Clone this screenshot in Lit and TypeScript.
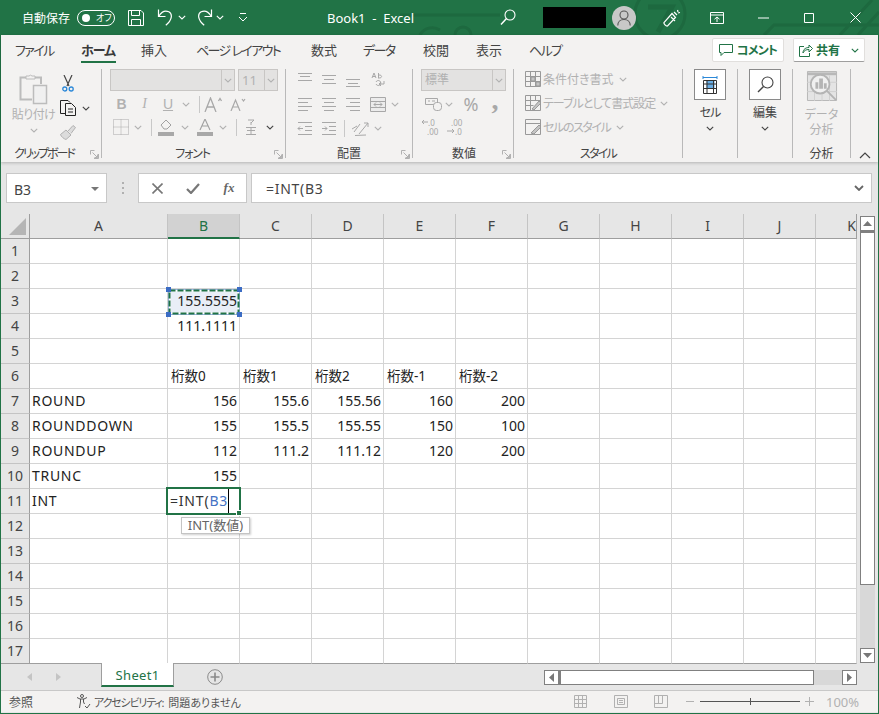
import { LitElement, html, css, svg } from "lit";
import { customElement } from "lit/decorators.js";

const chev = (c = "#b1b1b1") => html`<svg class="chev" width="8" height="5" viewBox="0 0 8 5"><path d="M.8 .8 4 4 7.2 .8" fill="none" stroke="${c}" stroke-width="1.1"/></svg>`;
const lines = (ys: number[][]) => html`<svg width="16" height="16" viewBox="0 0 16 16">${ys.map(([x1, x2, y]) => svg`<path d="M${x1} ${y + .5}H${x2}" stroke="#a8a8a8"/>`)}</svg>`;

const COLS = ["A", "B", "C", "D", "E", "F", "G", "H", "I", "J", "K"];
const DATA: Record<number, (string | null)[]> = {
  3: [null, "155.5555"],
  4: [null, "111.1111"],
  6: [null, "桁数0", "桁数1", "桁数2", "桁数-1", "桁数-2"],
  7: ["ROUND", "156", "155.6", "155.56", "160", "200"],
  8: ["ROUNDDOWN", "155", "155.5", "155.55", "150", "100"],
  9: ["ROUNDUP", "112", "111.2", "111.12", "120", "200"],
  10: ["TRUNC", "155"],
  11: ["INT"],
};
const TABS: [string, string][] = [["ファイル", "kn"], ["ホーム", "on"], ["挿入", ""], ["ページ レイアウト", "kn"], ["数式", ""], ["データ", "kn"], ["校閲", ""], ["表示", ""], ["ヘルプ", "kn"]];

@customElement("app-root")
export class AppRoot extends LitElement {
  static styles = css`
    :host { display: block; width: 879px; height: 714px; overflow: hidden; background: #e6e6e6;
      font-family: "Noto Sans", "Noto Sans CJK JP", sans-serif; font-feature-settings: "palt"; color: #444; }
    * { box-sizing: border-box; }
    svg { display: block; }
    .win { height: 714px; display: flex; flex-direction: column; border-left: 1px solid #217346; border-right: 1px solid #217346; border-bottom: 1px solid #217346; }

    .title { position: relative; height: 35px; margin: 0 -1px; background: #217346; color: #fff; display: grid; align-items: center; justify-items: start; padding-left: 22px;
      grid-template-columns: 55px 51px 29px 21px 19px 19px 22px 89px 173px 43px 69px 51px 47px 48px 46px 46px 1fr; font-size: 12px; }
    .title > * { position: relative; }
    .title > svg.bgp { position: absolute; left: 0; top: 0; }
    .toggle { width: 38px; height: 16px; border: 1px solid #fff; border-radius: 8px; display: flex; align-items: center; padding-left: 4px; font-size: 9px; gap: 6px; line-height: 14px; }
    .toggle i { width: 8px; height: 8px; border-radius: 50%; background: #fff; }
    .doc { font-size: 13px; white-space: pre; }
    .black { width: 63px; height: 21px; background: #000; }
    .avatar { width: 24px; height: 24px; border-radius: 50%; background: #c8c8c8; display: flex; align-items: center; justify-content: center; }

    .ribbon { background: #f3f2f1; height: 127px; box-shadow: 0 1px 3px rgba(0,0,0,.22); position: relative; z-index: 2; flex: none; }
    .tabs { height: 33px; display: flex; align-items: flex-start; }
    .tablist { display: grid; grid-template-columns: 66px 60px 55px 115px 52px 60px 53px 53px 40px; padding: 5px 0 0 14px; font-size: 13px; line-height: 20px; flex: 1; justify-items: start; }
    .tablist span { height: 22px; white-space: pre; }
    .tablist .kn { letter-spacing: -1.6px; }
    .tablist .on { font-weight: 700; border-bottom: 2px solid #217346; height: 23px; color: #3a3a3a; letter-spacing: -1px; padding-right: 1px; }
    .tbtn { height: 24px; width: 72px; margin: 3px 9px 0 0; background: #fff; border: 1px solid #e1dfdd; border-radius: 2px; display: flex; align-items: center; justify-content: center; gap: 4px; font-size: 12px; font-weight: 700; color: #217346; }
    .tbtn .cmt { letter-spacing: -.8px; }
    .tbtn.last { margin-right: 13px; gap: 3px; }
    .tbtn .more { margin-left: 8px; }
    .groups { display: flex; height: 89px; margin-top: 1px; }
    .g { flex: none; height: 89px; border-right: 1px solid #b9b9b9; position: relative; }
    .gb { height: 78px; }
    .gl { height: 14px; line-height: 14px; font-size: 12px; text-align: center; color: #444; white-space: nowrap; }
    .launch { position: absolute; right: 2px; bottom: -1px; }
    .g1 { width: 101px; } .g2 { width: 184px; } .g3 { width: 127px; } .g4 { width: 101px; } .g5 { width: 169px; } .g6, .g7 { width: 55px; } .g8 { width: 58px; }
    .g1 .gl { padding-right: 14px; letter-spacing: -2px; } .g2 .gl { padding-right: 2px; letter-spacing: -1.2px; } .g4 .gl { padding-left: 2px; }
    .g5 .gl { letter-spacing: -1.7px; }
    .collapse { margin: 83px 0 0 8px; }
    .g1 .gb { display: grid; grid-template-columns: 54px 46px; }
    .paste { display: flex; flex-direction: column; align-items: center; padding: 3px 0 0 11px; color: #b1b1b1; font-size: 12px; }
    .paste svg:first-child { height: 33px; }
    .paste span { line-height: 16px; margin-top: 2px; white-space: nowrap; letter-spacing: -.6px; }
    .paste .chev { margin-top: 5px; }
    .clipr { display: grid; grid-template-rows: 25px 24px 24px; padding-top: 2px; justify-items: start; align-items: center; }
    .copy { display: flex; align-items: center; gap: 5px; margin-left: 5px; }
    .ic5 { margin-left: 5px; } .ic7 { margin-left: 7px; }

    .row { display: grid; justify-items: center; align-items: center; height: 18px; color: #b1b1b1; }
    .vs { width: 1px; height: 17px; background: #c8c8c8; }
    .sel { display: flex; height: 22px; background: #e3e2e1; border: 1px solid #c8c6c4; font-size: 13px; color: #b1b1b1; align-items: center; line-height: 20px; }
    .sel b { margin-left: auto; width: 13px; height: 20px; border-left: 1px solid #c8c6c4; display: flex; align-items: center; justify-content: center; }
    .fonts { display: flex; gap: 3px; padding-left: 8px; }
    .fname { width: 125px; } .fsize { width: 40px; padding-left: 3px; }
    .f2 { grid-template-columns: 23px 23px 24px 12px 7px 1px 26px 24px; margin: 4px 0 0 8px; width: 141px; font-family: "Liberation Sans", sans-serif; }
    .f3 { grid-template-columns: 21px 13px 7px 1px 28px 10px 29px 8px 9px 1px 28px 10px; margin: 5px 0 0 8px; width: 165px; }
    .B { font-weight: 700; font-size: 14px; } .I { font-style: italic; font-size: 14px; font-family: "Liberation Serif", serif; } .U { text-decoration: underline; font-size: 14px; }
    .g3 .gb { padding: 0 0 0 7px; display: grid; grid-template-rows: 22px 22px 22px; row-gap: 2px; }
    .a { display: grid; justify-items: center; align-items: center; }
    .a12 { grid-template-columns: 24px 24px 24px 26px 8px; }
    .a3 { grid-template-columns: 24px 24px 3px 1px 29px 8px; justify-content: start; }
    .num .sel { margin-left: 8px; width: 85px; padding-left: 3px; font-size: 12px; }
    .n2 { grid-template-columns: 24px 8px 36px 12px; margin: 4px 0 0 8px; justify-content: start; }
    .n3 { grid-template-columns: 24px 24px; margin: 5px 0 0 8px; justify-content: start; }
    .pct { font-size: 18px; line-height: 18px; color: #a8a8a8; }
    .cm { font-size: 28px; font-weight: 700; line-height: 10px; height: 18px; font-family: "Liberation Serif", serif; color: #a8a8a8; }
    .st { display: grid; grid-template-rows: 24px 24px 24px; padding: 0 0 0 11px; }
    .st div { display: flex; align-items: center; gap: 2px; height: 20px; font-size: 12px; color: #b1b1b1; white-space: nowrap; }
    .st div .chev { margin-left: 3px; }
    .st .sp1 { letter-spacing: -1px; } .st .sp2 { letter-spacing: -1.4px; }
    .big { display: flex; flex-direction: column; align-items: center; font-size: 12px; line-height: 15px; color: #444; }
    .box { width: 32px; height: 31px; background: #fff; border: 1px solid #8a8a8a; display: flex; align-items: center; justify-content: center; margin: 0 0 5px; }
    .big .chev { margin-top: 6px; }
    .big .nr { letter-spacing: -1px; }
    .dis { color: #b1b1b1; }
    .ana { padding-top: 2px; margin-bottom: 6px; }

    .fbar { height: 52px; flex: none; padding-top: 11px; display: grid; grid-template-columns: 101px 31px 109px 621px; column-gap: 0; padding-left: 5px; background: #e6e6e6; font-size: 14px; }
    .nb, .fb, .fi { height: 30px; background: #fff; border: 1px solid #c8c8c8; display: flex; align-items: center; }
    .nb { padding: 2px 7px 0 7px; justify-content: space-between; color: #444; }
    .tri { width: 0; height: 0; border-left: 4px solid transparent; border-right: 4px solid transparent; border-top: 4px solid #777; }
    .dots { display: flex; flex-direction: column; gap: 3px; align-items: center; justify-content: center; height: 30px; padding-left: 0; }
    .dots i { width: 2px; height: 2px; background: #b0b0b0; }
    .fb { display: grid; grid-template-columns: 36px 36px 36px; justify-items: center; }
    .fx { font-family: "Liberation Serif", serif; font-style: italic; font-weight: 700; font-size: 13px; color: #666; }
    .fi { margin-left: 4px; width: 621px; padding: 0 7px 0 14px; justify-content: space-between; color: #444; }
    .fi span { letter-spacing: .7px; padding-top: 1px; }

    .main { display: flex; height: 450px; flex: none; }
    .sheet { width: 856px; display: grid; grid-template-columns: 29px 138px repeat(9, 72px) 41px; grid-auto-rows: 25px; height: 450px; background: #fff; font-size: 14px; color: #222; }
    .corner { background: #e6e6e6; border-right: 1px solid #9e9e9e; border-bottom: 1px solid #9e9e9e; padding: 4px 0 0 8px; }
    .ch { background: #e6e6e6; border-right: 1px solid #c4c4c4; border-bottom: 1px solid #9e9e9e; text-align: center; line-height: 24px; color: #444; }
    .ch.on { background: #d2d2d2; color: #217346; border-bottom: 2px solid #217346; }
    .ch.k { border-right: 1px solid #9e9e9e; text-align: right; }
    .rh { background: #e6e6e6; border-right: 1px solid #9e9e9e; border-bottom: 1px solid #c4c4c4; text-align: center; line-height: 24px; color: #444; }
    .c { border-right: 1px solid #d4d4d4; border-bottom: 1px solid #d4d4d4; line-height: 24px; padding: 0 2px; white-space: nowrap; position: relative; letter-spacing: 0; }
    .c.n { text-align: right; }
    .c.t { font-size: 14px; letter-spacing: .7px; }
    .c.j { font-size: 13.5px; padding-left: 3px; }
    .last { border-bottom-color: #9e9e9e; }
    .c.cut { background: #e9eef7; overflow: visible; }
    .ants { position: absolute; left: -2px; top: -2px; z-index: 3; }
    .edit { position: absolute; left: -2px; top: -2px; width: 75px; height: 28px; border: 2px solid #217346; background: #fff; z-index: 4; font-size: 14px; line-height: 24px; padding-left: 2px; color: #333; letter-spacing: .8px; }
    .edit em { font-style: normal; color: #4472c4; }
    .edit u { position: absolute; left: 60px; top: 0; width: 1px; height: 24px; background: #000; }
    .edit s { position: absolute; right: -3px; bottom: -3px; width: 6px; height: 6px; background: #217346; border: 1px solid #fff; }
    .tip { position: absolute; left: 13px; top: 28px; width: 69px; height: 17px; background: #fff; border: 1px solid #c4c4c4; box-shadow: 1px 1px 2px rgba(0,0,0,.2); z-index: 5; font-size: 13px; line-height: 15px; text-align: center; color: #666; }
    .vbar { margin: 2px 0 0 3px; width: 15px; height: 447px; display: flex; flex-direction: column; background: #d8d8d8; }
    .sb { flex: none; width: 15px; height: 15px; background: #fff; border: 1px solid #808080; display: flex; align-items: center; justify-content: center; }
    .vthumb { height: 354px; flex: none; background: #fff; border: 1px solid #808080; border-top-width: 2px; }
    .vbar .sp { flex: 1; }

    .sheets { height: 27px; flex: none; background: #e6e6e6; border-bottom: 1px solid #c8c8c8; display: flex; align-items: flex-start; }
    .nav { width: 100px; display: grid; grid-template-columns: 29px 29px; padding: 8px 0 0 14px; justify-items: center; border-top: 1px solid transparent; }
    .tab { width: 73px; height: 24px; margin-top: -1px; background: #fff; border-left: 1px solid #9e9e9e; border-right: 1px solid #9e9e9e; border-bottom: 2px solid #217346; text-align: center; font-size: 13px; letter-spacing: .3px; line-height: 24px; color: #217346; position: relative; z-index: 2; }
    .plus { margin: 5px 0 0 33px; }
    .hbar { margin: 6px 21px 0 auto; width: 313px; height: 15px; display: flex; background: #d8d8d8; }
    .hthumb { width: 255px; background: #fff; border: 1px solid #808080; border-left-width: 2px; flex: none; }
    .hbar .sp { flex: 1; }

    .status { height: 21px; flex: none; background: #f3f2f1; display: flex; align-items: center; font-size: 12px; color: #555; }
    .status .ref { padding-left: 8px; width: 75px; }
    .a11y { display: flex; align-items: center; gap: 3px; font-size: 11px; }
    .a11y b { font-weight: 400; letter-spacing: -1.2px; margin-right: 5px; }
    .sr { margin-left: auto; display: grid; grid-template-columns: 40px 41px 40px 19px 100px 18px 8px 33px; align-items: center; justify-items: center; margin-right: 19px; color: #b1b1b1; }
    .pctz { font-size: 13px; justify-self: start; }
    .slider { width: 100px; height: 9px; }
  `;

  private title() {
    return html`<div class="title">
      <svg class="bgp" width="879" height="35" viewBox="0 0 879 35" fill="none" stroke="#1d693f" stroke-width="3">
        <path d="M400 15H500M545 15H600M420 35a14 14 0 0 1 20-5M455 35a8 8 0 0 1 16 0"/>
        <circle cx="660" cy="14" r="25"/><path d="M648 7H672L658 32" stroke-width="5"/>
        <path d="M764 35 774 25H879M840 35 872 0M858 35 879 12"/>
      </svg>
      <span>自動保存</span>
      <div class="toggle"><i></i><span>オフ</span></div>
      <svg width="16" height="16" viewBox="0 0 16 16" fill="none" stroke="#fff"><path d="M.5.500h12.500l2.500 2.500v12.500H.5zM3.500.5v5h8v-5M3.500 15.500v-6h9v6"/></svg>
      <svg width="16" height="17" viewBox="0 0 16 17" fill="none" stroke="#fff" stroke-width="1.200"><path d="M1.500 .5V7.500H8.500"/><path d="M1.800 7.200C4.500 2.800 8.500 1.300 11.800 2.800c3.800 1.900 3.800 7.800-3 13.500"/></svg>
      ${chev("#fff")}
      <svg width="16" height="17" viewBox="0 0 16 17" fill="none" stroke="#fff" stroke-width="1.200"><path d="M14.500 .5V7.500H7.500"/><path d="M14.200 7.200C11.500 2.800 7.500 1.300 4.200 2.800.4 4.700.4 10.500 7.200 16.300"/></svg>
      ${chev("#fff")}
      <svg width="10" height="9" viewBox="0 0 10 9" fill="none" stroke="#fff"><path d="M2 .5H8M1 4 5 8 9 4"/></svg>
      <span class="doc">Book1  -  Excel</span>
      <svg width="16" height="17" viewBox="0 0 16 17" fill="none" stroke="#fff" stroke-width="1.100"><circle cx="10" cy="6" r="5"/><path d="M6.500 9.500 1 15.500" stroke-width="1.500"/></svg>
      <div class="black"></div>
      <div class="avatar"><svg width="14" height="16" viewBox="0 0 14 16" fill="none" stroke="#555" stroke-width="1.100"><circle cx="7" cy="5" r="4"/><path d="M.8 15.500c0-3.500 2.500-6 6.200-6s6.200 2.500 6.200 6"/></svg></div>
      <svg width="18" height="18" viewBox="0 0 18 18" fill="none" stroke="#fff" stroke-width="1.200"><path d="M9 4.500 1 13.500c-.5 1 2 4 3.500 3.500l8-8.500zM11 3l3 3M14.500 1l.5 2M17 3.500l-2 .5M8 8l4 4"/></svg>
      <svg width="14" height="12" viewBox="0 0 14 12" fill="none" stroke="#fff"><path d="M.5.500h13v11H.5zM.5 3h13M7 10V5M4.500 7.200 7 5l2.500 2.200"/></svg>
      <svg width="11" height="2" viewBox="0 0 11 2"><path d="M0 1H11" stroke="#fff"/></svg>
      <svg width="10" height="10" viewBox="0 0 10 10" fill="none" stroke="#fff"><path d="M.5.500h9v9h-9z"/></svg>
      <svg width="11" height="11" viewBox="0 0 11 11" fill="none" stroke="#fff"><path d="M.5.500l10 10M10.500.500l-10 10"/></svg>
    </div>`;
  }

  private launcher() {
    return html`<svg class="launch" width="9" height="9" viewBox="0 0 9 9" fill="none" stroke="#b1b1b1"><path d="M8.500 4V8.500H4M.5.500h4M.5.500v4M2.500 2.500 7.500 7.500M4.500 7.500h3v-3"/></svg>`;
  }

  private clipboard() {
    return html`<div class="g g1"><div class="gb">
      <div class="paste">
        <svg width="30" height="33" viewBox="0 0 30 33" fill="none"><path d="M7.500 5.500H1.500V27.500H13M16 5.500h6V12" stroke="#bcbcbc" stroke-width="2"/><path d="M7 7V4h3a2 2 0 0 1 3 0h3v3z" stroke="#bcbcbc" fill="#f3f2f1"/><path d="M14.500 13.500h13v18h-13z" stroke="#bcbcbc" stroke-width="1.500" fill="#f0f0f0"/></svg>
        <span>貼り付け</span>
        ${chev()}
      </div>
      <div class="clipr">
        <svg class="ic7" width="12" height="17" viewBox="0 0 12 17" fill="none"><path d="M2 0 7 11M10 0 5 11" stroke="#444" stroke-width="1.200"/><circle cx="2.800" cy="14" r="2" stroke="#2b88d8" stroke-width="1.300"/><circle cx="9.200" cy="14" r="2" stroke="#2b88d8" stroke-width="1.300"/></svg>
        <div class="copy"><svg width="17" height="16" viewBox="0 0 17 16" fill="none" stroke="#222"><path d="M4 .5H.5V13.500H5M4 .5h4l2 2"/><path d="M5.500 3.500h6l4 4v8h-10zM8 9h5M8 12h5" /></svg>${chev("#444")}</div>
        <svg class="ic5" width="16" height="15" viewBox="0 0 16 15" fill="none" stroke="#b1b1b1"><path d="M.5 9.500 6 5l5 5-5 4.500C4 14 1 11.500.5 9.500zM8 6l5-5.500 2.500 2-4.500 6" fill="#dcdcdc"/></svg>
      </div>
    </div><div class="gl">クリップボード</div>${this.launcher()}</div>`;
  }

  private font() {
    return html`<div class="g g2"><div class="gb">
      <div class="fonts">
        <div class="sel fname"><b>${chev()}</b></div>
        <div class="sel fsize">11<b>${chev()}</b></div>
      </div>
      <div class="row f2">
        <span class="B">B</span><span class="I">I</span><span class="U">U</span>${chev()}<i></i><div class="vs"></div>
        <svg width="19" height="15" viewBox="0 0 19 15" fill="none" stroke="#a8a8a8" stroke-width="1.300"><path d="M1 15 6.500 1 12 15M3 10h7M14.500 4 16 1.500 17.500 4"/></svg>
        <svg width="17" height="13" viewBox="0 0 17 13" fill="none" stroke="#a8a8a8" stroke-width="1.200"><path d="M1 13 5.500 2 10 13M2.500 9h6M12 1l1.500 2L15 1"/></svg>
      </div>
      <div class="row f3">
        <svg width="16" height="16" viewBox="0 0 16 16" fill="none" stroke="#a8a8a8" stroke-dasharray="1 1"><path d="M.5.500h15v15H.5zM8 .5v15M.5 8h15"/></svg>${chev()}<i></i><div class="vs"></div>
        <svg width="16" height="17" viewBox="0 0 16 17"><path d="M3 6 8 1l5 5-4 4H6z" fill="none" stroke="#a0a0a0"/><path d="M0 13h16v4H0z" fill="#a8a8a8"/></svg>${chev()}
        <svg width="16" height="17" viewBox="0 0 16 17"><path d="M3 11 8 0l5 11M5 7h6" fill="none" stroke="#a0a0a0" stroke-width="1.100"/><path d="M0 13h16v4H0z" fill="#a8a8a8"/></svg>${chev()}
        <i></i><div class="vs"></div>
        <svg width="10" height="16" viewBox="0 0 10 16" fill="none" stroke="#a8a8a8"><path d="M2 1h6L5 4M5 3v3M0 8.500h10M1 11.500h8M5 9v6M0 15.500h10"/></svg>${chev("#444")}
      </div>
    </div><div class="gl">フォント</div>${this.launcher()}</div>`;
  }

  private align() {
    const a = (r: number[][]) => lines(r);
    return html`<div class="g g3"><div class="gb">
      <div class="a a12">
        ${a([[1, 15, 1], [3, 13, 4], [1, 15, 8]])}${a([[1, 15, 3], [3, 13, 7], [1, 15, 11]])}${a([[1, 15, 7], [3, 13, 11], [1, 15, 14]])}
        <svg width="14" height="16" viewBox="0 0 14 16" fill="none" stroke="#a8a8a8"><path d="M1 6 3 1l2 5M1.500 4.500h3M7.500 1v5.500M7.500 4a1.500 1.500 0 1 1 0 1M5 12a2.500 2.500 0 1 0 0-2M13 9v3H8M10 10l-2 2 2 2"/></svg>
      </div>
      <div class="a a12">
        ${a([[1, 15, 2], [1, 11, 6], [1, 15, 10], [1, 11, 14]])}${a([[1, 15, 2], [3, 13, 6], [1, 15, 10], [3, 13, 14]])}${a([[1, 15, 2], [5, 15, 6], [1, 15, 10], [5, 15, 14]])}
        <svg width="16" height="15" viewBox="0 0 16 15" fill="none" stroke="#a8a8a8"><path d="M.5.500h15v14H.5zM.5 4.500h15M.5 10.500h15M4 7.500h8M6 5.500l-2 2 2 2M10 5.500l2 2-2 2" fill="#ececec"/></svg>
        ${chev()}
      </div>
      <div class="a a3">
        <svg width="16" height="16" viewBox="0 0 16 16" fill="none" stroke="#a8a8a8"><path d="M1 2.500h14M8 6.500h7M8 10.500h7M1 14.500h14M6 8.500H1M3 6.500l-2 2 2 2"/></svg>
        <svg width="16" height="16" viewBox="0 0 16 16" fill="none" stroke="#a8a8a8"><path d="M1 2.500h14M8 6.500h7M8 10.500h7M1 14.500h14M1 8.500h5M4 6.500l2 2-2 2"/></svg>
        <i></i><div class="vs"></div>
        <svg width="18" height="16" viewBox="0 0 18 16" fill="none" stroke="#a8a8a8"><path d="M1 9 6 6M3 12l6-8M8 14 17 3M13 3h4v4M4 15.500l11-.5"/></svg>
        ${chev()}
      </div>
    </div><div class="gl">配置</div>${this.launcher()}</div>`;
  }

  private number() {
    return html`<div class="g g4 num"><div class="gb">
      <div class="sel">標準<b>${chev()}</b></div>
      <div class="row n2">
        <svg width="17" height="15" viewBox="0 0 17 15" fill="none" stroke="#a8a8a8"><path d="M.5 1.500h12v6H.5zM3 4h2M7 4h3"/><rect x="8.500" y="5.500" width="8" height="8" rx="3" fill="#f3f2f1"/></svg>
        ${chev()}<span class="pct">%</span><span class="cm">,</span>
      </div>
      <div class="row n3">
        <svg width="22" height="18" viewBox="0 0 22 18"><text x="6" y="8" font-size="8" fill="#a8a8a8">.0</text><text x="5" y="17" font-size="8" fill="#a8a8a8">.00</text><path d="M6 4H0M2 2 0 4l2 2" fill="none" stroke="#a8a8a8"/></svg>
        <svg width="22" height="18" viewBox="0 0 22 18"><text x="5" y="8" font-size="8" fill="#a8a8a8">.00</text><text x="9" y="17" font-size="8" fill="#a8a8a8">.0</text><path d="M1 13H8M6 11l2 2-2 2" fill="none" stroke="#a8a8a8"/></svg>
      </div>
    </div><div class="gl">数値</div>${this.launcher()}</div>`;
  }

  private styles_() {
    return html`<div class="g g5"><div class="gb st">
      <div><svg width="16" height="16" viewBox="0 0 16 16" fill="none" stroke="#999"><path d="M.5.500h15v15H.5zM.5 5.500h15M.5 10.500h15M5.500.5v15M10.500.5v15"/><path d="M6 6h4v4H6zM11 11h4v4h-4z" fill="#c4c4c4"/></svg>条件付き書式${chev()}</div>
      <div><svg width="16" height="16" viewBox="0 0 16 16" fill="none" stroke="#999"><path d="M.5.500h15v15H.5zM.5 5.500h15M.5 10.500h8M5.500.5v15M10.500.5v5"/><path d="M7 14 14 6l2 2-7 7z" fill="#c4c4c4"/></svg><span class="sp1">テーブルとして書式設定</span>${chev()}</div>
      <div><svg width="16" height="16" viewBox="0 0 16 16" fill="none" stroke="#999"><path d="M.5.500h15v15H.5zM.5 4.500h15"/><path d="M6 14 14 6l2 2-7 7z" fill="#c4c4c4"/></svg><span class="sp2">セルのスタイル</span>${chev()}</div>
    </div><div class="gl">スタイル</div></div>`;
  }

  private ribbon() {
    return html`<div class="ribbon">
      <div class="tabs">
        <div class="tablist">${TABS.map(([t, c]) => html`<span class="${c}">${t}</span>`)}</div>
        <div class="tbtn"><svg width="14" height="13" viewBox="0 0 14 13" fill="none" stroke="#217346"><path d="M.5.500h13v8H5l-3 3v-3H.5z"/></svg><span class="cmt">コメント</span></div>
        <div class="tbtn last"><svg width="14" height="14" viewBox="0 0 14 14" fill="none" stroke="#217346"><path d="M5 3.500H.5v10h10V10M4 10c0-4 3-5.500 6-5.500V2l3.500 3.500L10 9V6.500c-3 0-5 1-6 3.500z"/></svg>共有<span class="more">${chev("#217346")}</span></div>
      </div>
      <div class="groups">
        ${this.clipboard()}${this.font()}${this.align()}${this.number()}${this.styles_()}
        <div class="g g6"><div class="gb big">
          <div class="box"><svg width="16" height="18" viewBox="0 0 16 18" fill="none"><path d="M1 1.500h14M1 0v3M15 0v3" stroke="#2b88d8"/><path d="M1.500 4.500h13v13h-13z" stroke="#333"/><path d="M4.500 5h8v7h-8z" fill="#69aee6"/><path d="M1.500 8h13M1.500 12.500h13M5 4.500v13M11.500 4.500v13" stroke="#333"/></svg></div>
          <span class="nr">セル</span>${chev("#444")}
        </div></div>
        <div class="g g7"><div class="gb big">
          <div class="box"><svg width="17" height="17" viewBox="0 0 17 17" fill="none" stroke="#444" stroke-width="1.100"><circle cx="10.500" cy="6.500" r="5.500"/><path d="M6.500 10.500 1 16" stroke-width="1.500"/></svg></div>
          <span>編集</span>${chev("#444")}
        </div></div>
        <div class="g g8"><div class="gb big dis">
          <svg class="ana" width="32" height="32" viewBox="0 0 32 32" fill="none"><path d="M.5.500h31v31H.5z" fill="#e4e4e4" stroke="#b4b4b4"/><path d="M0 1.500h32v3H0z" fill="#b8b8b8"/><path d="M0 12h32M0 22h32M8 5v27M16 5v27M24 5v27" stroke="#cfcfcf"/><circle cx="14" cy="14" r="10" fill="#f0f0f0" stroke="#b4b4b4" stroke-width="2"/><path d="M9 12h3v7H9zM13 8h4v11h-4zM18 13h3v6h-3z" fill="#b4b4b4"/><path d="M21 21 31 31" stroke="#b4b4b4" stroke-width="2"/></svg>
          <span>データ</span><span>分析</span>
        </div><div class="gl">分析</div></div>
        <svg class="collapse" width="12" height="7" viewBox="0 0 12 7" fill="none" stroke="#444" stroke-width="1.200"><path d="M1 6 6 1l5 5"/></svg>
      </div>
    </div>`;
  }

  private formula() {
    return html`<div class="fbar">
      <div class="nb"><span>B3</span><i class="tri"></i></div>
      <div class="dots"><i></i><i></i><i></i></div>
      <div class="fb">
        <svg width="11" height="11" viewBox="0 0 11 11" fill="none" stroke="#777" stroke-width="1.600"><path d="M.5.500l10 10M10.500.500l-10 10"/></svg>
        <svg width="14" height="11" viewBox="0 0 14 11" fill="none" stroke="#777" stroke-width="2.200"><path d="M1 6l4 4 8-9"/></svg>
        <span class="fx">fx</span>
      </div>
      <div class="fi"><span>=INT(B3</span><svg width="10" height="6" viewBox="0 0 10 6" fill="none" stroke="#666" stroke-width="1.800"><path d="M1 1l4 4 4-4"/></svg></div>
    </div>`;
  }

  private cell(r: number, ci: number) {
    const v = DATA[r]?.[ci] ?? null;
    const last = r === 17 ? "last" : "";
    if (r === 3 && ci === 1) {
      return html`<div class="c n cut ${last}">155.5555
        <svg class="ants" width="76" height="30" viewBox="0 0 76 30" fill="none">
          <path d="M2.500 2.500h71v25h-71z" stroke="#3b6cc4"/>
          <path d="M3.500 3.500h69v23h-69z" stroke="#fff" stroke-width="2"/>
          <path d="M3.500 3.500h69v23h-69z" stroke="#217346" stroke-width="2" stroke-dasharray="6 2"/>
          <path d="M0 0h5v5H0zM71 0h5v5h-5zM0 25h5v5H0zM71 25h5v5h-5z" fill="#3b6cc4"/>
        </svg></div>`;
    }
    if (r === 11 && ci === 1) {
      return html`<div class="c ${last}"><div class="edit">=INT(<em>B3</em><u></u><s></s></div><div class="tip">INT(数値)</div></div>`;
    }
    if (v === null) return html`<div class="c ${last}"></div>`;
    const isNum = /^[\d.]+$/.test(v);
    const cls = isNum ? "n" : r === 6 ? "j" : "t";
    return html`<div class="c ${cls} ${last}">${v}</div>`;
  }

  private sheet() {
    const rows = Array.from({ length: 17 }, (_, i) => i + 1);
    return html`<div class="sheet">
      <div class="corner"><svg width="17" height="17" viewBox="0 0 17 17"><path d="M17 0V17H0z" fill="#b5b5b5"/></svg></div>
      ${COLS.map((c) => html`<div class="ch ${c === "B" ? "on" : ""} ${c === "K" ? "k" : ""}">${c}</div>`)}
      ${rows.map((r) => html`<div class="rh ${r === 17 ? "last" : ""}">${r}</div>${COLS.map((_, ci) => this.cell(r, ci))}`)}
    </div>`;
  }

  render() {
    return html`<div class="win">
      ${this.title()}
      ${this.ribbon()}
      ${this.formula()}
      <div class="main">
        ${this.sheet()}
        <div class="vbar">
          <div class="sb"><svg width="9" height="5" viewBox="0 0 9 5"><path d="M4.500 0 9 5H0z" fill="#777"/></svg></div>
          <div class="vthumb"></div>
          <div class="sp"></div>
          <div class="sb"><svg width="9" height="5" viewBox="0 0 9 5"><path d="M4.500 5 9 0H0z" fill="#777"/></svg></div>
        </div>
      </div>
      <div class="sheets">
        <div class="nav">
          <svg width="5" height="8" viewBox="0 0 5 8"><path d="M5 0V8L0 4z" fill="#c4c4c4"/></svg>
          <svg width="5" height="8" viewBox="0 0 5 8"><path d="M0 0V8L5 4z" fill="#c4c4c4"/></svg>
        </div>
        <div class="tab">Sheet1</div>
        <svg class="plus" width="16" height="16" viewBox="0 0 16 16" fill="none" stroke="#8a8a8a"><circle cx="8" cy="8" r="7.300"/><path d="M8 3.500v9M3.500 8h9" stroke-width="1.600"/></svg>
        <div class="hbar">
          <div class="sb"><svg width="5" height="9" viewBox="0 0 5 9"><path d="M0 4.500 5 0V9z" fill="#777"/></svg></div>
          <div class="hthumb"></div>
          <div class="sp"></div>
          <div class="sb"><svg width="5" height="9" viewBox="0 0 5 9"><path d="M5 4.500 0 0V9z" fill="#777"/></svg></div>
        </div>
      </div>
      <div class="status">
        <span class="ref">参照</span>
        <div class="a11y">
          <svg width="15" height="15" viewBox="0 0 15 15" fill="none" stroke="#555"><circle cx="6" cy="2" r="1.500"/><path d="M1 3.500 4 5h4l3-1.500M4.500 5v3l-1 6M7.500 5v3l1 2M9 12l2 2 3-4"/></svg>
          <span><b>アクセシビリティ:</b>問題ありません</span>
        </div>
        <div class="sr">
          <svg width="13" height="13" viewBox="0 0 13 13" fill="none" stroke="#b1b1b1"><path d="M.5.500h12v12H.5zM4.500.5v12M8.500.5v12M.5 4.500h12M.5 8.500h12"/></svg>
          <svg width="14" height="13" viewBox="0 0 14 13" fill="none" stroke="#b1b1b1"><path d="M.5.500h13v12H.5zM3.500 3.500h7v6h-7zM5 5.500h4M5 7.500h4"/></svg>
          <svg width="14" height="13" viewBox="0 0 14 13" fill="none" stroke="#b1b1b1"><path d="M.5.500h13v12H.5zM.5 8.500h8M4.500.5v8M8.500.5v8"/></svg>
          <svg width="9" height="1" viewBox="0 0 9 1"><path d="M0 .5h8" stroke="#b1b1b1"/></svg>
          <div class="slider"><svg width="100" height="9" viewBox="0 0 100 9"><path d="M0 4.500h100" stroke="#555"/><path d="M50.500 1v7" stroke="#555"/></svg></div>
          <svg width="9" height="9" viewBox="0 0 9 9"><path d="M0 4.500h9M4.500 0v9" stroke="#b1b1b1"/></svg>
          <i></i>
          <span class="pctz">100%</span>
        </div>
      </div>
    </div>`;
  }
}
